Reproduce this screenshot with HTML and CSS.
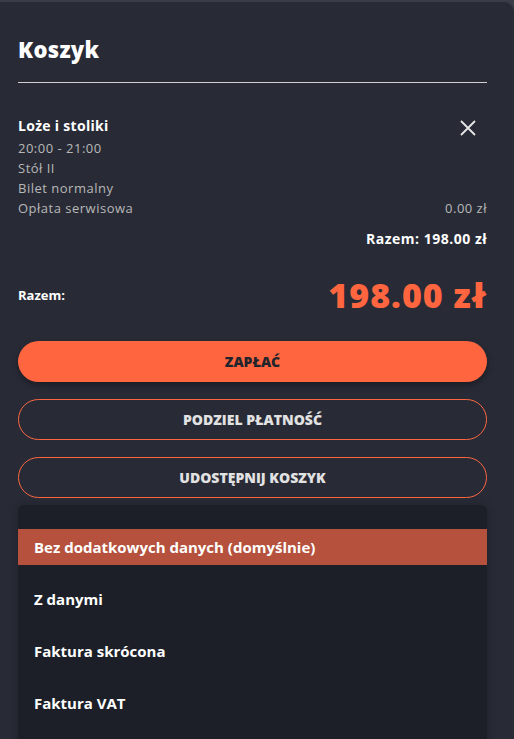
FILE: index.html
```html
<!DOCTYPE html>
<html lang="pl">
<head>
    <meta charset="UTF-8">
    <meta name="viewport" content="width=device-width, initial-scale=1.0">
    <title>Koszyk</title>
    <link rel="stylesheet" href="styles.css">
</head>
<body>
    <div class="cart">
        <h1 class="cart-title">Koszyk</h1>

        <div class="item">
            <div class="item-head">
                <div class="item-name">Loże i stoliki</div>
                <button class="remove" aria-label="Usuń">
                    <svg width="16" height="16" viewBox="0 0 16 16">
                        <path d="M1 1 L15 15 M15 1 L1 15" stroke="#e6e6e6" stroke-width="1.8" fill="none"/>
                    </svg>
                </button>
            </div>
            <div class="item-line">20:00 - 21:00</div>
            <div class="item-line">Stół II</div>
            <div class="item-line">Bilet normalny</div>
            <div class="item-line row">
                <span>Opłata serwisowa</span>
                <span>0.00 zł</span>
            </div>
            <div class="item-total">Razem: 198.00 zł</div>
        </div>

        <div class="summary">
            <span class="summary-label">Razem:</span>
            <span class="summary-price">198.00 zł</span>
        </div>

        <div class="actions">
            <button class="btn primary">ZAPŁAĆ</button>
            <button class="btn outline">PODZIEL PŁATNOŚĆ</button>
            <button class="btn outline">UDOSTĘPNIJ KOSZYK</button>
        </div>

        <ul class="dropdown">
            <li class="option selected">Bez dodatkowych danych (domyślnie)</li>
            <li class="option">Z danymi</li>
            <li class="option">Faktura skrócona</li>
            <li class="option">Faktura VAT</li>
        </ul>
    </div>
</body>
</html>
```

FILE: styles.css
```css
* {
    margin: 0;
    padding: 0;
    box-sizing: border-box;
}

body {
    font-family: "Open Sans", Lato, sans-serif;
    background: #3a3d47;
    padding-top: 2px;
    height: 100vh;
    overflow: hidden;
}

.cart {
    background: #282b36;
    border-top-right-radius: 10px;
    height: 100%;
    padding: 33px 27px 0 18px;
    color: white;
}

.cart-title {
    font-size: 22px;
    font-weight: 800;
    line-height: 28px;
    letter-spacing: 0.3px;
    padding-bottom: 19px;
    border-bottom: 1px solid #d0d0d0;
}

.item {
    padding-top: 33px;
}

.item-head {
    display: flex;
    justify-content: space-between;
    align-items: flex-start;
    height: 22px;
}

.item-name {
    font-size: 14px;
    font-weight: 700;
    line-height: 20px;
    letter-spacing: 0.3px;
}

.remove {
    background: none;
    border: none;
    margin: 4px 11px 0 0;
    cursor: pointer;
}

.item-line {
    font-size: 13px;
    color: #b8b8b8;
    line-height: 20px;
    letter-spacing: 0.5px;
}

.row {
    display: flex;
    justify-content: space-between;
}

.item-total {
    text-align: right;
    font-size: 14px;
    font-weight: 700;
    line-height: 20px;
    letter-spacing: 0.5px;
    margin-top: 11px;
}

.summary {
    display: flex;
    justify-content: space-between;
    align-items: center;
    margin-top: 26px;
}

.summary-label {
    font-size: 13px;
    font-weight: 700;
}

.summary-price {
    font-size: 34px;
    font-weight: 800;
    color: #ff6640;
    line-height: 40px;
    letter-spacing: 1px;
}

.actions {
    display: flex;
    flex-direction: column;
    gap: 17px;
    margin-top: 26px;
}

.btn {
    height: 41px;
    border-radius: 21px;
    font-family: "Open Sans", sans-serif;
    font-size: 14px;
    font-weight: 800;
    cursor: pointer;
}

.primary {
    background: #ff6640;
    border: none;
    color: #22242b;
    box-shadow: 0 3px 6px rgba(0, 0, 0, 0.35);
}

.outline {
    background: transparent;
    border: 1px solid #ff6640;
    color: #e2e2e2;
}

.dropdown {
    list-style: none;
    background: #1c1f27;
    border-radius: 6px 6px 0 0;
    margin-top: 7px;
    padding-top: 24px;
    display: flex;
    flex-direction: column;
    gap: 16px;
    box-shadow: 0 0 8px rgba(0, 0, 0, 0.25);
    height: 300px;
}

.option {
    height: 36px;
    line-height: 36px;
    padding-left: 16px;
    font-size: 15px;
    font-weight: 700;
}

.selected {
    background: #b5513c;
}
```
